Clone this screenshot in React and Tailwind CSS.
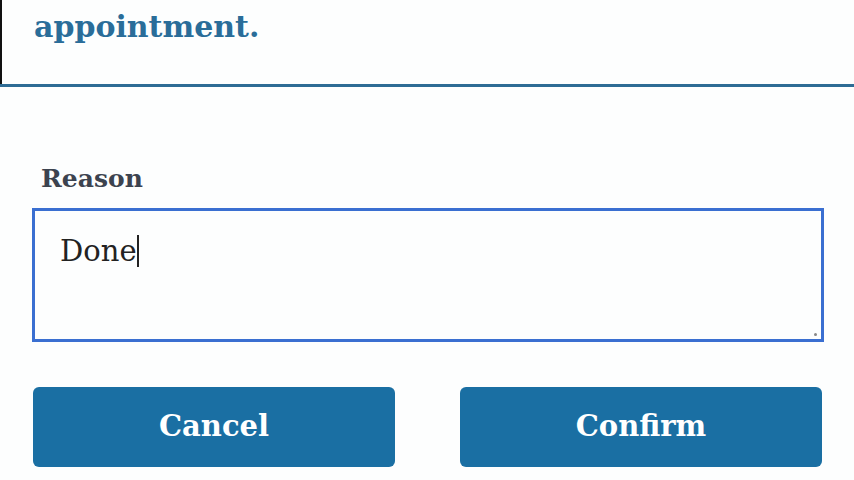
import React from "react";

export default function App() {
  const serif = { fontFamily: '"DejaVu Serif", "Liberation Serif", serif' };
  return (
    <div className="w-[854px] h-[480px] bg-[#fdfefe] overflow-hidden" style={serif}>
      <div className="h-[84px] border-l-2 border-[#111] pl-[32px] pt-[7px]">
        <div className="text-[30px] leading-[40px] font-bold text-[#2a6d99]">appointment.</div>
      </div>
      <div className="h-[3px] bg-[#2e6c95]"></div>
      <div className="pt-[76px] px-[32px]">
        <div className="pl-[9px] text-[25px] leading-[32px] font-bold text-[#3c434f]">Reason</div>
        <div className="mt-[13px] h-[134px] w-[792px] border-[3px] border-[#3a6fd1] pl-[25px] pt-[20px] relative">
          <div className="flex items-center text-[29px] leading-[40px] text-[#222]">
            <span>Done</span>
            <span className="inline-block w-[2px] h-[32px] bg-[#222]"></span>
          </div>
          <div className="absolute right-[4px] bottom-[3px] w-[3px] h-[3px] bg-[#888] rounded-full"></div>
        </div>
        <div className="mt-[45px] flex gap-[65px] pl-[1px]">
          <button className="w-[362px] h-[80px] rounded-[6px] bg-[#1a6fa3] text-white text-[29px] font-bold" style={serif}>Cancel</button>
          <button className="w-[362px] h-[80px] rounded-[6px] bg-[#1a6fa3] text-white text-[29px] font-bold" style={serif}>Confirm</button>
        </div>
      </div>
    </div>
  );
}
